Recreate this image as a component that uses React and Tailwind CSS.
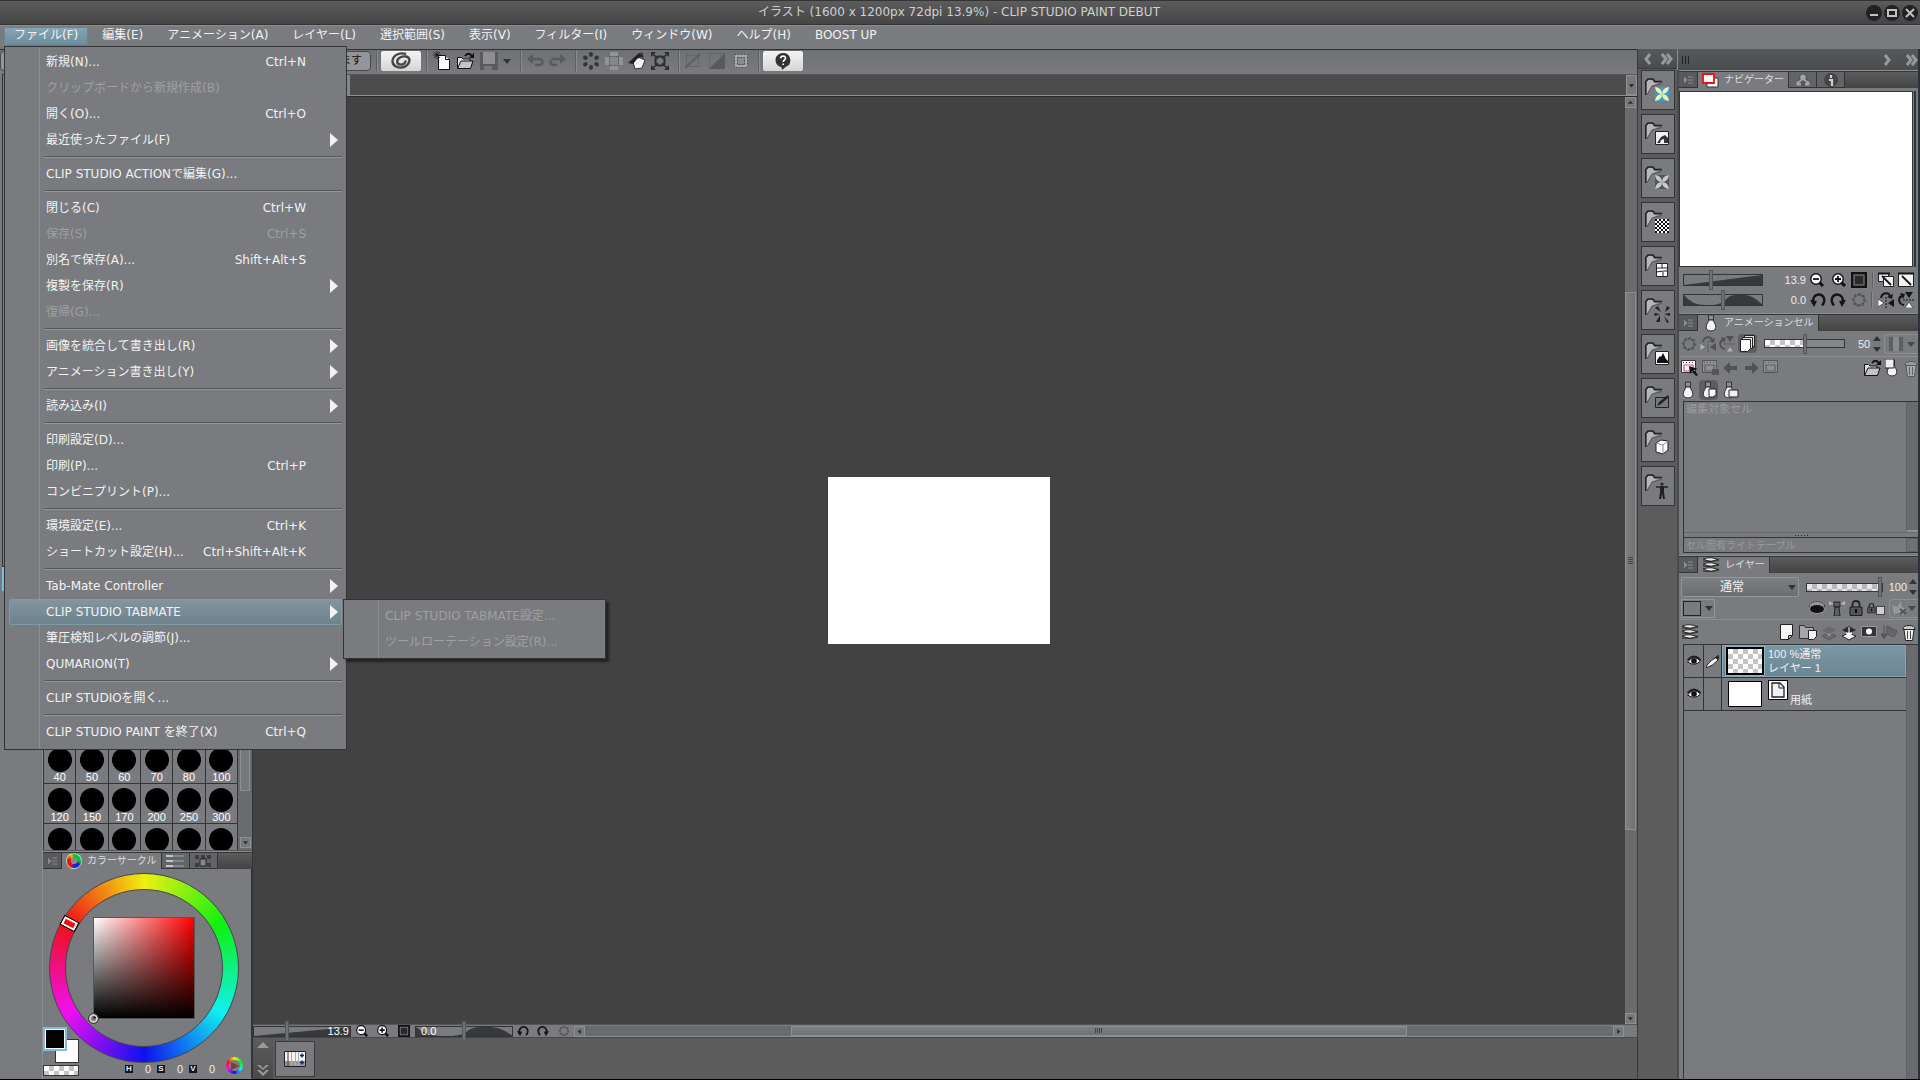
import { useState } from "react"

const MENUS = ["ファイル(F)", "編集(E)", "アニメーション(A)", "レイヤー(L)", "選択範囲(S)", "表示(V)", "フィルター(I)", "ウィンドウ(W)", "ヘルプ(H)", "BOOST UP"]

const FILE_MENU = [
	[
		{ label: "新規(N)...", keys: "Ctrl+N" },
		{ label: "クリップボードから新規作成(B)", off: true },
		{ label: "開く(O)...", keys: "Ctrl+O" },
		{ label: "最近使ったファイル(F)", sub: true },
	],
	[{ label: "CLIP STUDIO ACTIONで編集(G)..." }],
	[
		{ label: "閉じる(C)", keys: "Ctrl+W" },
		{ label: "保存(S)", keys: "Ctrl+S", off: true },
		{ label: "別名で保存(A)...", keys: "Shift+Alt+S" },
		{ label: "複製を保存(R)", sub: true },
		{ label: "復帰(G)...", off: true },
	],
	[
		{ label: "画像を統合して書き出し(R)", sub: true },
		{ label: "アニメーション書き出し(Y)", sub: true },
	],
	[{ label: "読み込み(I)", sub: true }],
	[
		{ label: "印刷設定(D)..." },
		{ label: "印刷(P)...", keys: "Ctrl+P" },
		{ label: "コンビニプリント(P)..." },
	],
	[
		{ label: "環境設定(E)...", keys: "Ctrl+K" },
		{ label: "ショートカット設定(H)...", keys: "Ctrl+Shift+Alt+K" },
	],
	[
		{ label: "Tab-Mate Controller", sub: true },
		{ label: "CLIP STUDIO TABMATE", sub: true, open: true },
		{ label: "筆圧検知レベルの調節(J)..." },
		{ label: "QUMARION(T)", sub: true },
	],
	[{ label: "CLIP STUDIOを開く..." }],
	[{ label: "CLIP STUDIO PAINT を終了(X)", keys: "Ctrl+Q" }],
]

const TABMATE_MENU = ["CLIP STUDIO TABMATE設定...", "ツールローテーション設定(R)..."]

const BRUSH_SIZES = [40, 50, 60, 70, 80, 100, 120, 150, 170, 200, 250, 300]
// next row, only the top of each dot is scrolled into view
const NEXT_SIZES = [350, 400, 450, 500, 600, 700]

const CHECKER = "bg-[repeating-conic-gradient(#c4c4c4_0_25%,#ffffff_0_50%)] bg-[length:10px_10px]"

const Svg = ({ w = 18, h = 18, className = "", children }) => (
	<svg width={w} height={h} viewBox={`0 0 ${w} ${h}`} className={`shrink-0 ${className}`} aria-hidden="true">{children}</svg>
)

/* ---------- icons ---------- */

const NewIcon = () => (
	<Svg w={18} h={20}>
		<path d="M5.5 4.5h7l4 4v10h-11z" fill="#fff" stroke="#111" />
		<path d="M12.5 4.5v4h4" fill="#ddd" stroke="#111" />
		<path d="M4 0v8M0 4h8M1 1l6 6M7 1l-6 6" stroke="#111" strokeWidth=".8" />
	</Svg>
)

const OpenIcon = () => (
	<Svg w={19} h={18}>
		<path d="M1.500 16.500v-11h4l1.500 1.500h7v3" fill="#ddd" stroke="#111" />
		<path d="M1.500 16.500l3.500-7.500h12l-2.500 7.500z" fill="#c4c4c6" stroke="#111" />
		<path d="M9 4c2-3 5-3 7 0" fill="none" stroke="#111" strokeWidth="1.800" />
		<path d="M18 1v5h-5z" fill="#111" />
	</Svg>
)

const SaveIcon = () => (
	<Svg w={18} h={18}>
		<path d="M0 0h18v18H0z" fill="#5b5b5d" />
		<path d="M3 0h12v12H3z" fill="#8d8e91" />
		<path d="M4 14h8v4H4z" fill="#77787b" />
	</Svg>
)

const UndoIcon = ({ flip }) => (
	<Svg w={17} h={14} className={flip ? "-scale-x-100" : ""}>
		<path d="M4 5h8q3.500 0 3.500 3t-3.500 3H8" fill="none" stroke="#5a5b5d" strokeWidth="2.500" strokeDasharray={flip ? "9 0 1 1" : "0"} />
		<path d="M0 5l6-5v10z" fill="#5a5b5d" />
	</Svg>
)

const DotsIcon = () => (
	<Svg>
		{[0, 60, 120, 180, 240, 300].map((a) => (
			<ellipse key={a} cx="9" cy="2.500" rx="2" ry="2.400" fill="#333435" transform={`rotate(${a} 9 9)`} />
		))}
	</Svg>
)

const ClearOutsideIcon = () => (
	<Svg>
		<path d="M5 0h8v5h5v8h-5v5H5v-5H0V5h5z" fill="#929396" />
		<rect x="4.500" y="4.500" width="9" height="9" fill="#86878a" stroke="#555" strokeDasharray="2 1" />
	</Svg>
)

const FillIcon = () => (
	<Svg>
		<path d="M5 10l5-5 7 3-3 8-7 1z" fill="#f4f4f4" stroke="#333" />
		<path d="M0 11L11 1l4 3-6 3-4 5z" fill="#222" />
		<path d="M10 6q0-5 4-5l1 5" fill="none" stroke="#222" />
	</Svg>
)

const TransformIcon = () => (
	<Svg>
		<path d="M2 2l14 14M16 2L2 16" stroke="#2c2d2e" strokeWidth="1.500" />
		<rect x="4.500" y="4.500" width="9" height="9" rx="3" fill="none" stroke="#2c2d2e" strokeWidth="2" />
		<circle cx="9" cy="9" r="3" fill="#7a7b7f" />
		<path d="M0 0h5L0 5zM18 0v5l-5-5zM0 18v-5l5 5zM18 18h-5l5-5z" fill="#2c2d2e" />
	</Svg>
)

const DeselectIcon = () => (
	<Svg w={16} h={16}>
		<rect x="1.500" y="2.500" width="12" height="11" fill="none" stroke="#5e5f62" strokeDasharray="2 1" />
		<path d="M0 15L15 1" stroke="#5e5f62" strokeWidth="2" />
	</Svg>
)

const InvertIcon = () => (
	<Svg w={16} h={16}>
		<path d="M16 0v16H0z" fill="#58595b" />
		<path d="M.5 15V.5H15" fill="none" stroke="#5e5f62" strokeDasharray="2 1" />
	</Svg>
)

const BorderIcon = () => (
	<Svg w={16} h={16}>
		<path d="M1 1h14v14H1z" fill="#a6a7a9" />
		<rect x="1.500" y="1.500" width="13" height="13" fill="none" stroke="#4e4f52" strokeDasharray="2 1" />
		<rect x="4.500" y="4.500" width="7" height="7" fill="#8a8b8e" stroke="#4e4f52" strokeDasharray="2 1" />
	</Svg>
)

const SpiralIcon = () => (
	<Svg w={20} h={18}>
		<path d="M15 2C9 0 2 3 1.500 9c0 5 5 7 9 6.500 5-.5 8-4 8-7.500-.5-4-6-4.500-9.500-2.500-4 2.500-3.500 6.500 0 7 3 .5 6-1.500 5.500-4" fill="none" stroke="#47484a" strokeWidth="2.400" />
	</Svg>
)

const HelpIcon = () => (
	<Svg w={18} h={18}>
		<path d="M9 1a7.200 7.200 0 0 1 3 13.800L8 18l-.5-2.700A7.200 7.200 0 0 1 9 1z" fill="#333" />
		<path d="M6.500 6.200Q7 4 9.200 4q2.300.2 2.300 2.200c0 1.600-2.300 1.800-2.300 3.800M9.200 11.500v1.600" fill="none" stroke="#fff" strokeWidth="1.600" />
	</Svg>
)

const MagIcon = ({ plus, size = 14 }) => (
	<svg width={size} height={size} viewBox="0 0 14 14" className="shrink-0" aria-hidden="true">
		<path d="M9 9l4 4" stroke="#111" strokeWidth="3" />
		<circle cx="6" cy="6" r="5.200" fill="#fff" stroke="#111" strokeWidth="1.400" />
		<path d={plus ? "M3 6h6M6 3v6" : "M3 6h6"} stroke="#111" strokeWidth="1.800" />
	</svg>
)

const FitIcon = ({ size = 16 }) => (
	<svg width={size} height={size} viewBox="0 0 16 16" className="shrink-0" aria-hidden="true">
		<path d="M0 0h16v16H0z" fill="#111" />
		<rect x="3" y="3" width="10" height="10" fill="#2a2a2b" stroke="#77787b" strokeWidth="1.300" />
	</svg>
)

const RotateIcon = ({ flip, size = 16 }) => (
	<svg width={size} height={size} viewBox="0 0 16 16" className={`shrink-0 ${flip ? "-scale-x-100" : ""}`} aria-hidden="true">
		<path d="M3.500 11C2 6 5 2.500 9 2.500c4 0 6 4 5 7.500-.5 1.500-1 2.500-2 3.500" fill="none" stroke="#151515" strokeWidth="2.400" />
		<path d="M0 8l7 1-3 6z" fill="#151515" />
	</svg>
)

const ResetIcon = ({ size = 16 }) => (
	<svg width={size} height={size} viewBox="0 0 16 16" className="shrink-0" aria-hidden="true">
		{[0, 45, 90, 135, 180, 225, 270, 315].map((a) => (
			<path key={a} d="M5 3l5-2.500L9 4z" fill="#515254" transform={`rotate(${a} 8 8)`} />
		))}
	</svg>
)

const FlipIcon = ({ turn, off }) => (
	<Svg w={16} h={16} className={`${turn ? "-rotate-90" : ""} ${off ? "opacity-40" : ""}`}>
		<path d="M8 5v11" stroke="#151515" strokeDasharray="2 1" />
		<path d="M0 7l6 4-6 4z" fill="#fff" stroke="#333" strokeWidth=".7" />
		<path d="M16 7l-6 4 6 4z" fill="#151515" />
		<path d="M3 6c1-6 8-6 9-2" fill="none" stroke="#151515" strokeWidth="2" />
		<path d="M15 2l-1 5-5-2z" fill="#151515" />
	</Svg>
)

const ResizeViewIcon = ({ single }) => (
	<Svg w={16} h={16}>
		{!single && <path d="M.5 1.500h10v8H.5z" fill="#e6e6e8" stroke="#222" />}
		<path d={single ? "M.5 1.500h15v13H.5z" : "M5.500 4.500h10v10h-10z"} fill="#f2f2f2" stroke="#222" />
		<path d={single ? "M0 .5h16v2H0z" : "M0 .5h12v2H0z"} fill="#151515" />
		<path d="M4 4l9 9" stroke="#151515" strokeWidth="1.800" />
	</Svg>
)

const FolderShape = () => (
	<>
		<path d="M1 17V4l2-2h4l2 3h4L7 8z" fill="#b5b6b9" />
		<path d="M.8 17V3.500L3 1h5l2 2.500h7" fill="none" stroke="#222" strokeWidth="1.600" />
		<path d="M2 17l5-9 10-2.500" fill="none" stroke="#555" />
	</>
)

// small picture drawn over the lower right of each material folder
const MATERIAL_BADGES = [
	<g key="color"><path d="M10 9h14v14H10z" fill="#2f9fdc" /><path d="M10 9q7 1 7 7-6 0-7-7zM24 9q-7 1-7 7 6 0 7-7zM10 23q7-1 7-7-6 0-7 7zM24 23q-7-1-7-7 6 0 7 7z" fill="#f5efa8" /></g>,
	<g key="mono"><path d="M10.500 9.500h13v13h-13z" fill="#f1f1f1" stroke="#222" /><path d="M12 21l4-6 4-2 3 3v5h-4v-4l-3 1-1 3z" fill="#333" /></g>,
	<g key="pattern"><path d="M10 9h14v14H10z" fill="#55565a" /><path d="M10 9q7 1 7 7-6 0-7-7zM24 9q-7 1-7 7 6 0 7-7zM10 23q7-1 7-7-6 0-7 7zM24 23q-7-1-7-7 6 0 7 7z" fill="#c9cacc" /></g>,
	<g key="tone"><path d="M10 9h14v14H10z" fill="#fff" />{Array.from({ length: 49 }, (_, i) => i).filter((i) => i % 2 === 0).map((i) => (<rect key={i} x={10 + (i % 7) * 2} y={9 + Math.floor(i / 7) * 2} width="2" height="2" fill="#111" />))}</g>,
	<g key="frame"><path d="M11.500 9.500h11v13h-11z" fill="#fff" stroke="#222" /><path d="M11 14h12M17 9v5M11 18l8-1 4 0M18 18v4" fill="none" stroke="#222" /></g>,
	<g key="lines" fill="#222"><path d="M10 10l3-2 3 6zM22 8l3 2-5 4zM9 15l6 1-5 2zM25 18l-6-2 6-1zM11 24l4-7 0 7zM24 24l-5-6 3 7z" /></g>,
	<g key="image"><path d="M10.500 9.500h13v13h-13z" fill="#fff" stroke="#222" /><path d="M12 21v-3l3-4 1 1 2-4 3 6 2 2v2z" fill="#111" /></g>,
	<g key="pen"><path d="M10.500 11.500h13v10h-13z" fill="#77787b" stroke="#222" /><path d="M12 20l2-4 9-7 1 2-8 7z" fill="#222" /></g>,
	<g key="cube"><path d="M11 13l5-3 7 1v9l-5 4-7-2z" fill="#fff" stroke="#222" /><path d="M11 13l7 2 5-4M18 15v9" fill="none" stroke="#888" /></g>,
	<g key="pose"><circle cx="17" cy="10" r="1.500" fill="#222" /><path d="M11 13h12" stroke="#222" strokeWidth="1.500" /><path d="M15 12h4v6l1 7h-2l-1-5-1 5h-2l1-7z" fill="#222" /></g>,
]

const BulbIcon = ({ children, w = 14 }) => (
	<Svg w={w} h={18}>
		<path d="M4.500 1h5v5h-5z" fill="#8f9093" stroke="#333" />
		<path d="M5 6l-2.500 5q-1.500 5.500 4.500 6 6-.5 4.500-6L9 6z" fill="#f3f3f3" stroke="#333" />
		{children}
	</Svg>
)

const StackIcon = () => (
	<Svg w={18} h={16}>
		{[1, 6, 11].map((y) => (
			<g key={y}>
				<path d={`M1 ${y + 1}q8-3 16 1-8 3-16-1z`} fill="#ececec" stroke="#2a2a2b" />
				<path d={`M1 ${y + 3}q8 2 16-2`} fill="none" stroke="#2a2a2b" />
			</g>
		))}
	</Svg>
)

const CelIcon = ({ off, children }) => (
	<Svg w={18} h={16} className={off ? "opacity-50" : ""}>
		<path d="M.5.5h14v12H.5z" fill={off ? "#a4a5a7" : "#fff"} stroke="#333" />
		<path d="M2 2.500h11" stroke="#333" strokeDasharray="1 2" />
		<path d="M3 5h9v6H3z" fill="none" stroke={off ? "#444" : "#d93a9c"} strokeWidth="1.200" />
		{children}
	</Svg>
)

const LockIcon = ({ w = 14, h = 16 }) => (
	<svg width={w} height={h} viewBox="0 0 14 16" className="shrink-0" aria-hidden="true">
		<path d="M3.500 7V4.500q0-3.500 3.500-3.500t3.500 3.500V7" fill="none" stroke="#222" strokeWidth="1.800" />
		<path d="M1 7h12v8.500H1z" fill="#555659" stroke="#1c1c1d" />
		<path d="M7 9v4" stroke="#111" strokeWidth="2" />
	</svg>
)

const EyeIcon = () => (
	<Svg w={14} h={12}>
		<path d="M.5 7Q7-1 13.500 6 8 12 .5 7z" fill="#f1f1f1" stroke="#1b1b1c" />
		<path d="M.5 5Q7-2 13.500 5" fill="none" stroke="#1b1b1c" strokeWidth="1.800" />
		<circle cx="7" cy="6" r="2.800" fill="#111" />
	</Svg>
)

const MergeIcon = ({ off }) => (
	<Svg w={16} h={17} className={off ? "opacity-40" : ""}>
		<path d="M1 6l7-4 7 4-7 4z" fill={off ? "#555" : "#2a2a2b"} />
		<path d="M1 12l7-3 7 3-7 4z" fill={off ? "#555" : "#f0f0f0"} stroke="#222" />
		<path d="M8 3v8M5 9l3 4 3-4z" fill="#fff" stroke={off ? "#555" : "#fff"} />
	</Svg>
)

const PageIcon = () => (
	<Svg w={16} h={17}>
		<path d="M1.500.5h12v11l-4 4h-8z" fill="#f8f8f8" stroke="#222" />
		<path d="M13.500 11.500h-4v4z" fill="#bbb" stroke="#222" />
	</Svg>
)

const TrashIcon = () => (
	<Svg w={14} h={17}>
		<path d="M2 5.500h10l-1.500 11h-7z" fill="#f2f2f2" stroke="#222" />
		<path d="M5.500 7v8M8.500 7v8" stroke="#444" />
		<path d="M1 5.500q0-4 6-4t6 4z" fill="#ccc" stroke="#222" />
	</Svg>
)

const Tri = ({ dir }) => (
	<Svg w={8} h={8}>
		<path d={{ up: "M0 6h8L4 1z", down: "M0 2h8L4 7z", left: "M6 0v8L1 4z", right: "M2 0v8l5-4z" }[dir]} fill="#323334" />
	</Svg>
)

const Chevrons = ({ d, w = 10, h = 12 }) => (
	<Svg w={w} h={h}><path d={d} fill="none" stroke="#98999b" strokeWidth="3" /></Svg>
)

/* ---------- shared parts ---------- */

const Sep = () => <div className="w-[2px] self-stretch border-l border-[#5e5f62] bg-[#8b8c8f]" />

const IconButton = ({ label, className = "", children }) => (
	<button type="button" aria-label={label} className={`flex shrink-0 items-center justify-center ${className}`}>{children}</button>
)

const RANGE = "absolute inset-0 h-full w-full appearance-none bg-transparent [&::-webkit-slider-thumb]:w-1 [&::-webkit-slider-thumb]:appearance-none [&::-webkit-slider-thumb]:border [&::-webkit-slider-thumb]:border-[#55565a] [&::-webkit-slider-thumb]:bg-[#707174]"

const WedgeSlider = ({ label, value, wave, className }) => {
	const [v, setV] = useState(value)
	return (
		<div className={`relative shrink-0 border border-[#333435] bg-[#7a7b7f] ${className}`}>
			<svg viewBox="0 0 80 12" preserveAspectRatio="none" className="block h-full w-full" aria-hidden="true">
				<path d={wave ? "M0 0Q8 12 22 12H0zM30 12Q40 11 44 4 48 0 54 0H62Q70 0 80 11V12z" : "M0 12L80 0v12z"} fill="#38393b" />
			</svg>
			<input type="range" min="0" max="100" aria-label={label} value={v} onChange={(e) => setV(e.target.value)} className={`${RANGE} [&::-webkit-slider-thumb]:h-5`} />
		</div>
	)
}

const OpacitySlider = ({ label, value, className, children }) => {
	const [v, setV] = useState(value)
	return (
		<div className={`relative h-[9px] shrink-0 border border-[#333435] bg-[#85868a] ${className}`}>
			{children}
			<input type="range" min="0" max="100" aria-label={label} value={v} onChange={(e) => setV(e.target.value)} className={`${RANGE} [&::-webkit-slider-thumb]:h-5`} />
		</div>
	)
}

const Spinner = () => (
	<div className="flex flex-col gap-[2px]">
		<IconButton label="増やす"><Tri dir="up" /></IconButton>
		<IconButton label="減らす"><Tri dir="down" /></IconButton>
	</div>
)

const TabBar = ({ icon, title, children }) => (
	<div className="flex h-[17px] shrink-0 border-t border-[#333435] bg-linear-to-b from-[#5c5c5c] to-[#444444]">
		<button type="button" aria-label="パレットメニュー" className="flex w-[18px] items-center justify-center border-b border-[#333435] bg-[#58595b]">
			<Svg w={9} h={8}><path d="M0 1v6l3-3zM4 1h5M4 4h5M4 7h5" fill="#8a8b8e" stroke="#8a8b8e" /></Svg>
		</button>
		<button type="button" className="flex items-center gap-[5px] border-x border-[#333435] bg-[#7a7b7f] px-1 text-[10px] leading-4 text-[#dedede]">
			{icon}
			<span>{title}</span>
		</button>
		{children}
	</div>
)

const BackTab = ({ label, children }) => (
	<button type="button" aria-label={label} className="flex w-7 items-center justify-center border-r border-b border-[#333435] bg-[#636467]">{children}</button>
)

const ScrollButton = ({ dir, label }) => (
	<button type="button" aria-label={label} className="flex size-[11px] shrink-0 items-center justify-center border border-[#8f9093] bg-[#77787b]">
		<svg width="5" height="5" viewBox="0 0 8 8" aria-hidden="true">
			<path d={{ up: "M0 6h8L4 1z", down: "M0 2h8L4 7z", left: "M6 0v8L1 4z", right: "M2 0v8l5-4z" }[dir]} fill="#2b2c2d" />
		</svg>
	</button>
)

/* ---------- menus ---------- */

const SubMenu = () => (
	<ul role="menu" className="absolute top-0 left-[334px] z-20 w-[263px] border border-[#333435] bg-[linear-gradient(90deg,transparent_34px,#8d8e91_34px,#8d8e91_35px,transparent_35px)] bg-[#7a7b7f] py-[3px] shadow-[3px_3px_2px_#222]">
		{TABMATE_MENU.map((label) => (
			<li key={label}>
				<button type="button" role="menuitem" disabled className="flex h-[26px] items-center pl-[41px] whitespace-nowrap text-[#a0a0a0]">{label}</button>
			</li>
		))}
	</ul>
)

const FileMenu = () => (
	<div role="menu" className="absolute top-[46px] left-1 z-10 w-[343px] border border-[#333435] bg-[linear-gradient(90deg,transparent_34px,#8d8e91_34px,#8d8e91_35px,transparent_35px)] bg-[#7a7b7f] px-1 pt-[2px] pb-1 text-xs">
		{FILE_MENU.map((group, i) => (
			<div key={i}>
				{i > 0 && <div className="ml-9 flex h-2 items-center"><div className="h-[2px] w-full border-t border-[#555659] bg-[#97989a]" /></div>}
				{group.map((item) => (
					<div key={item.label} className="relative">
						<button
							type="button"
							role="menuitem"
							disabled={item.off}
							className={`flex h-[26px] w-full items-center rounded-xs pr-1 pl-[37px] whitespace-nowrap ${item.off ? "text-[#a0a0a0]" : "text-[#f2f2f2]"} ${item.open ? "bg-linear-to-b from-[#84959f] to-[#6b828d] inset-ring inset-ring-[#7d9aa7]" : ""}`}
						>
							<span className="flex-1 text-left">{item.label}</span>
							<span>{item.keys}</span>
							<span className="flex w-8 justify-end">
								{item.sub && <Svg w={8} h={14}><path d="M0 0v14l8-7z" fill="#f2f2f2" /></Svg>}
							</span>
						</button>
						{item.open && <SubMenu />}
					</div>
				))}
			</div>
		))}
	</div>
)

const TitleBar = () => (
	<header className="flex h-[25px] shrink-0 items-center border-t border-b border-[#333435] bg-linear-to-b from-[#5c5c5c] to-[#454545] pr-[2px]">
		<div className="w-[52px]" />
		<h1 className="flex-1 pb-px text-center text-xs text-[#cfcfcf]">イラスト (1600 x 1200px 72dpi 13.9%) - CLIP STUDIO PAINT DEBUT</h1>
		<div className="flex gap-[2px]">
			{["M4 10h8", "M4 5h8v6H4z", "M4 4l8 8M12 4l-8 8"].map((d, i) => (
				<IconButton key={d} label={["最小化", "最大化", "閉じる"][i]} className="size-4 rounded-full bg-[#222]">
					<Svg w={16} h={16}><path d={d} fill="none" stroke="#c2c2c2" strokeWidth="2" /></Svg>
				</IconButton>
			))}
		</div>
	</header>
)

const MenuBar = () => (
	<nav className="flex h-[24px] shrink-0 items-start gap-1 border-t border-[#8d8e91] bg-[#7a7b7f] pt-px pl-1 text-xs text-[#f2f2f2]">
		{MENUS.map((m, i) => (
			<button key={m} type="button" className={`h-[18px] rounded-xs px-[10px] pb-[2px] leading-4 ${i === 0 ? "bg-linear-to-b from-[#87a6b5] to-[#6d8d9c] inset-ring inset-ring-[#6a8795]" : ""}`}>{m}</button>
		))}
	</nav>
)

const CommandBar = () => (
	<div className="flex h-[25px] shrink-0 items-center gap-[5px] border-t border-[#2f3031] bg-linear-to-b from-[#6f7074] to-[#7a7b7f] pb-[2px]">
		<button type="button" className="h-5 w-[371px] rounded border border-[#47484a] bg-[#949598] pr-2 text-right text-[11px] leading-4 text-[#111]">ます</button>
		<Sep />
		<IconButton label="CLIP STUDIO" className="-ml-[2px] h-5 w-10 rounded-xs bg-linear-to-b from-[#f4f4f4] to-[#d4d6d6]"><SpiralIcon /></IconButton>
		<Sep />
		<IconButton label="新規"><NewIcon /></IconButton>
		<IconButton label="開く"><OpenIcon /></IconButton>
		<IconButton label="保存"><SaveIcon /></IconButton>
		<IconButton label="保存メニュー" className="mr-1"><Tri dir="down" /></IconButton>
		<Sep />
		<IconButton label="取り消し"><UndoIcon /></IconButton>
		<IconButton label="やり直し" className="mr-1"><UndoIcon flip /></IconButton>
		<Sep />
		<IconButton label="消去"><DotsIcon /></IconButton>
		<IconButton label="選択範囲外を消去"><ClearOutsideIcon /></IconButton>
		<IconButton label="塗りつぶし"><FillIcon /></IconButton>
		<IconButton label="拡大・縮小・回転" className="mr-1"><TransformIcon /></IconButton>
		<Sep />
		<IconButton label="選択を解除"><DeselectIcon /></IconButton>
		<IconButton label="選択範囲を反転" className="mx-[3px]"><InvertIcon /></IconButton>
		<IconButton label="選択範囲の境界線を表示" className="mr-1"><BorderIcon /></IconButton>
		<Sep />
		<IconButton label="ヘルプ" className="-ml-[2px] h-5 w-10 rounded-xs bg-linear-to-b from-[#f4f4f4] to-[#d4d6d6]"><HelpIcon /></IconButton>
	</div>
)

/* ---------- left side ---------- */

const ColorCircle = () => (
	<section className="flex h-[227px] shrink-0 flex-col border-t border-[#8d8e91]">
		<TabBar
			title="カラーサークル"
			icon={<span className="size-4 rounded-full border border-white/60 bg-[radial-gradient(circle,#888_3px,transparent_3px),conic-gradient(#10c030,#10c030_25%,#1020f0_35%,#1020f0_48%,#f01010_60%,#f01010_80%,#f0b010_92%,#10c030)]" />}
		>
			<BackTab label="カラースライダー"><Svg w={18} h={12}><path d="M0 1h18M0 6h18M0 11h18" stroke="#85868a" strokeWidth="2" /><path d="M0 1h7M0 6h7M0 11h7" stroke="#c4c5c7" strokeWidth="2" /></Svg></BackTab>
			<BackTab label="カラーセット"><Svg w={16} h={12}><path d="M0 0h4v4H0zM6 0h4v4H6zM12 0h4v4h-4zM0 8h4v4H0zM12 8h4v4h-4z" fill="#3d3e40" /><path d="M5 4h6v7H5z" fill="#888" stroke="#222" /></Svg></BackTab>
		</TabBar>
		<div className="relative flex-1 border-r border-[#333435]">
			<div className="relative mt-1 ml-[6px] flex size-[190px] items-center justify-center rounded-full border border-[#44454a] bg-[conic-gradient(#f0f010,#10f010,#10f0f0,#1010f0,#f010f0,#f01018,#f0f010)]">
				<div className="flex size-[158px] items-center justify-center rounded-full border border-[#44454a] bg-[#7a7b7f]">
					<div className="size-[102px] border border-[#55565a] bg-[linear-gradient(to_top,#000,transparent),linear-gradient(to_right,#fff,#f00)]" />
				</div>
				<span className="absolute top-[45px] left-[12px] h-[9px] w-[15px] rotate-[28deg] border-2 border-white bg-[#f01010] outline outline-black" />
				<span className="absolute top-[140px] left-[39px] size-[9px] rounded-full border-2 border-[#d0d0d0] outline outline-[#333]" />
			</div>
			<div className="absolute bottom-[2px] left-0 h-[49px] w-[37px]">
				<button type="button" aria-label="サブカラー" className="absolute top-3 left-3 size-[24px] border border-[#333435] bg-white" />
				<button type="button" aria-label="メインカラー" className="absolute top-0 left-0 size-[24px] border-2 border-[#7dbce0] bg-black inset-ring inset-ring-white" />
				<button type="button" aria-label="透明色" className={`absolute bottom-0 left-0 h-[11px] w-[36px] border border-[#333435] ${CHECKER}`} />
			</div>
			<dl className="absolute right-[30px] bottom-px flex font-['Liberation_Sans',sans-serif] text-[11px] leading-4 text-[#ededed]">
				{["H", "S", "V"].map((k) => (
					<div key={k} className="flex w-8 items-center">
						<dt className="flex h-2 w-2 items-center justify-center bg-[#14142a] text-[8px] font-bold">{k}</dt>
						<dd className="w-[18px] text-right">0</dd>
					</div>
				))}
			</dl>
			<button type="button" aria-label="色空間の切り替え" className="absolute right-2 bottom-1 flex size-[17px] items-center justify-center rounded-full bg-[radial-gradient(circle,#7a7b7f_5px,transparent_6px),conic-gradient(#f0f010,#10f010,#10f0f0,#1010f0,#f010f0,#f01018,#f0f010)]">
				<Svg w={8} h={8}><path d="M0 0l8 4-8 4z" fill="#7d3c30" /></Svg>
			</button>
		</div>
	</section>
)

const LeftDock = () => (
	<aside className="flex w-[253px] shrink-0 border-r border-[#333435] bg-[#7a7b7f]">
		<div className="flex w-[43px] shrink-0 flex-col border-r border-[#8d8e91] pl-[2px]">
			<div className="h-[493px] border border-[#333435]" />
			<button type="button" aria-label="ツール" className="h-6 bg-[#7dbce0]" />
		</div>
		<div className="flex min-w-0 flex-1 flex-col pb-px">
			<div className="flex min-h-0 flex-1 flex-col justify-end border-b border-[#55565a]">
				<div className="flex h-[106px]">
					<div className="grid flex-1 auto-rows-[40px] grid-cols-6 overflow-hidden border-l border-[#333435] font-['Liberation_Sans',sans-serif]">
						{BRUSH_SIZES.map((s) => (
							<button key={s} type="button" className="flex flex-col items-center border-r border-b border-[#333435] pt-1 text-[11px] leading-3 text-white">
								<span className="size-6 shrink-0 rounded-full bg-black" />
								<span className="z-0 -mt-px">{s}</span>
							</button>
						))}
						{NEXT_SIZES.map((s) => (
							<button key={s} type="button" aria-label={String(s)} className="flex justify-center border-r border-[#333435] pt-1">
								<span className="size-6 rounded-full bg-black" />
							</button>
						))}
					</div>
					<div className="flex w-[14px] flex-col items-center bg-[#6a6b6e] pb-[2px]">
						<div className="h-[47px] w-[10px] border border-[#8f9093] bg-[#77787b]" />
						<div className="flex-1" />
						<ScrollButton dir="down" label="下へ" />
					</div>
				</div>
			</div>
			<ColorCircle />
		</div>
	</aside>
)

/* ---------- canvas ---------- */

const ZoomRow = () => (
	<div className="flex h-[13px] shrink-0 items-center border-t border-[#55565a] bg-[#7a7b7f] font-['Liberation_Sans',sans-serif] text-[11px] text-white">
		<div className="relative w-[98px]">
			<WedgeSlider label="ズーム" value={34} className="h-[11px] w-full" />
			<span className="pointer-events-none absolute right-[2px] bottom-0 leading-3">13.9</span>
		</div>
		<div className="flex w-16 justify-around">
			<IconButton label="縮小"><MagIcon size={12} /></IconButton>
			<IconButton label="拡大"><MagIcon size={12} plus /></IconButton>
			<IconButton label="フィット"><FitIcon size={12} /></IconButton>
		</div>
		<div className="relative w-[98px]">
			<WedgeSlider label="回転" value={50} wave className="h-[11px] w-full" />
			<span className="pointer-events-none absolute bottom-0 left-[6px] leading-3">0.0</span>
		</div>
		<div className="flex w-[61px] justify-around">
			<IconButton label="左回転"><RotateIcon size={12} /></IconButton>
			<IconButton label="右回転"><RotateIcon size={12} flip /></IconButton>
			<IconButton label="回転をリセット"><ResetIcon size={12} /></IconButton>
		</div>
		<ScrollButton dir="left" label="左へ" />
		<div className="flex h-[11px] flex-1 justify-center border-b border-[#8f9093] bg-[#6a6b6e]">
			<div className="flex w-3/5 items-center justify-center gap-px border border-[#8f9093] bg-linear-to-b from-[#7e7f83] to-[#707174]">
				{[0, 1, 2, 3].map((n) => <span key={n} className="h-[5px] w-px bg-[#444]" />)}
			</div>
		</div>
		<ScrollButton dir="right" label="右へ" />
		<div className="w-[13px]" />
	</div>
)

const CanvasArea = () => (
	<main className="flex min-w-0 flex-1 flex-col">
		<CommandBar />
		<div className="flex min-h-0 flex-1">
			<LeftDock />
			<div className="flex min-w-0 flex-1 flex-col">
				<div className="flex h-[22px] shrink-0 justify-between border-t border-b border-[#8d8e91] border-t-[#55565a] bg-[#4c4c4c]">
					<div className="w-[97px] border-r-3 border-[#85868a] bg-[#7a7b7f]" />
					<button type="button" aria-label="タブ一覧" className="flex w-[11px] items-center justify-center border border-[#8f9093] bg-[#77787b]"><svg width="5" height="5" viewBox="0 0 8 8" aria-hidden="true"><path d="M0 2h8L4 7z" fill="#222" /></svg></button>
				</div>
				<div className="flex min-h-0 flex-1 border-t border-[#2b2b2b]">
					<div className="flex flex-1 items-center justify-center bg-[#424242]">
						<div className="h-[167px] w-[222px] bg-white" />
					</div>
					<div className="flex w-[12px] flex-col bg-[#6a6b6e] pr-px">
						<ScrollButton dir="up" label="上へ" />
						<div className="h-[184px]" />
						<div className="flex h-[58%] flex-col items-center justify-center gap-px border border-[#8f9093] bg-linear-to-r from-[#7e7f83] to-[#707174]">
							{[0, 1, 2, 3].map((n) => <span key={n} className="h-px w-[5px] bg-[#444]" />)}
						</div>
						<div className="flex-1" />
						<ScrollButton dir="down" label="下へ" />
					</div>
				</div>
				<ZoomRow />
				<div className="flex h-[42px] shrink-0 items-center gap-[2px] border-t border-[#47484a] bg-[#5c5c5c]">
					<div className="flex w-5 flex-col items-center justify-between self-stretch bg-linear-to-b from-[#5c5c5c] to-[#48494a] py-[3px]">
						<Svg w={12} h={7}><path d="M0 7l6-6 6 6z" fill="#98999b" /></Svg>
						<Svg w={12} h={12}><path d="M0 1h3l3 3 3-3h3L6 6zM0 6h3l3 3 3-3h3l-6 6z" fill="#98999b" /></Svg>
					</div>
					<IconButton label="タイムライン" className="h-[36px] w-[40px] border border-[#3a3b3c] bg-[#7a7b7f]">
						<Svg w={22} h={16}>
							<path d="M.5.5h21v15H.5z" fill="#f4f4f4" stroke="#222" />
							<path d="M1 10h20v5H1z" fill="#999" />
							<path d="M4 1v14" stroke="#6b2b2b" />
							<path d="M7.500 1v14M11.500 1v14M14.500 1v14" stroke="#aaa" />
							<path d="M16 4.500h4M18 2.500v4M16 11.500h4M18 9.500v4" stroke="#20207a" strokeWidth="1.500" />
						</Svg>
					</IconButton>
				</div>
			</div>
		</div>
	</main>
)

/* ---------- right side ---------- */

const MaterialStrip = () => (
	<aside className="flex w-[40px] shrink-0 flex-col border-l border-[#3a3b3c] bg-[#5c5c5c]">
		<div className="flex h-[20px] items-center justify-between border-b border-[#3a3b3c] bg-linear-to-b from-[#58595a] to-[#4a4b4c] px-1">
			<Chevrons d="M8 1L4 6l4 5" />
			<Chevrons d="M1 1l4 5-4 5M6 1l4 5-4 5" w={12} />
		</div>
		<div className="flex flex-col items-center gap-1 pt-px">
			{MATERIAL_BADGES.map((badge) => (
				<IconButton key={badge.key} label={`素材 ${badge.key}`} className="h-[40px] w-[34px] border border-[#333435] bg-[#7a7b7f]">
					<Svg w={25} h={25}><FolderShape />{badge}</Svg>
				</IconButton>
			))}
		</div>
	</aside>
)

const Navigator = () => (
	<section className="shrink-0 border-t border-[#8d8e91]">
		<TabBar
			title="ナビゲーター"
			icon={<Svg w={17} h={15}><path d="M5 5h11v9H5z" fill="#fff" stroke="#333" /><path d="M1 1h11v9H1z" fill="#fff" stroke="#f01010" strokeWidth="1.800" /></Svg>}
		>
			<BackTab label="サブビュー"><Svg w={14} h={12}><path d="M0 12q-1-6 4-6Q3 0 7 0t3 6q5 0 4 6z" fill="#a5a6a9" stroke="#3a3b3c" strokeWidth=".7" /><path d="M5 12V9H3l4-3 4 3H9v3z" fill="#55565a" /></Svg></BackTab>
			<BackTab label="情報"><Svg w={14} h={14}><circle cx="7" cy="7" r="7" fill="#444" /><path d="M7 2v3M5 7h3v6" stroke="#d0d0d0" strokeWidth="2.200" fill="none" /></Svg></BackTab>
		</TabBar>
		<div className="mt-[3px] mr-[2px] border-r-2 border-[#333435] pr-px">
			<div className="h-[176px] border border-[#333435] bg-white" />
		</div>
		<div className="grid grid-cols-[80px_1fr_104px] items-center gap-y-[2px] px-1 py-1 font-['Liberation_Sans',sans-serif] text-[11px] text-[#ededed]">
			<WedgeSlider label="ズーム倍率" value={34} className="h-3" />
			<output className="pr-1 text-right leading-[18px]">13.9</output>
			<div className="flex items-center justify-between">
				<IconButton label="縮小"><MagIcon /></IconButton>
				<IconButton label="拡大" className="mr-px ml-1"><MagIcon plus /></IconButton>
				<IconButton label="100%"><FitIcon /></IconButton>
				<Sep />
				<IconButton label="フィッティング"><ResizeViewIcon /></IconButton>
				<IconButton label="全体表示"><ResizeViewIcon single /></IconButton>
			</div>
			<WedgeSlider label="回転角度" value={50} wave className="h-3" />
			<output className="pr-1 text-right leading-[18px]">0.0</output>
			<div className="flex items-center justify-between">
				<IconButton label="左回転"><RotateIcon /></IconButton>
				<IconButton label="右回転"><RotateIcon flip /></IconButton>
				<IconButton label="回転をリセット"><ResetIcon /></IconButton>
				<Sep />
				<IconButton label="左右反転"><FlipIcon /></IconButton>
				<IconButton label="上下反転"><FlipIcon turn /></IconButton>
			</div>
		</div>
	</section>
)

const AnimationCel = () => (
	<section className="mb-[2px] shrink-0 border-t border-[#8d8e91] text-[11px]">
		<TabBar title="アニメーションセル" icon={<span className="flex w-[17px] justify-center"><BulbIcon /></span>} />
		<div className="flex h-[26px] items-center gap-[3px] border-b border-[#8d8e91] pl-[2px] text-[#ededed]">
			<ResetIcon />
			<FlipIcon off />
			<FlipIcon turn off />
			<IconButton label="オニオンスキン" className="size-[19px] rounded bg-[#5e5f62]">
				<Svg w={15} h={17}><path d="M4.500.5h10v11h-10z" fill="#ddd" stroke="#222" /><path d="M2.500 2.500h10v11h-10z" fill="#eee" stroke="#222" /><path d="M.5 4.500h10v9l-3 3h-7z" fill="#fff" stroke="#222" /></Svg>
			</IconButton>
			<OpacitySlider label="セルの不透明度" value={50} className="ml-1 w-[81px]">
				<div className={`h-full w-1/2 ${CHECKER}`} />
			</OpacitySlider>
			<output className="ml-[10px] font-['Liberation_Sans',sans-serif] leading-4">50</output>
			<Spinner />
			<button type="button" aria-label="レイヤーカラー" disabled className="flex h-5 flex-1 items-center gap-1 rounded-l border border-r-0 border-[#95969a] pl-1 opacity-70">
				<span className="h-[14px] w-[14px] shrink-0 border-x-4 border-[#55565a] bg-[#8f9093]" />
				<Tri dir="down" />
			</button>
		</div>
		<div className="flex h-[22px] items-center gap-[3px] pl-[2px]">
			<CelIcon><path d="M8 6l9 3-4 1 4 5-2 1-4-5-2 3z" fill="#111" /></CelIcon>
			<CelIcon off><path d="M10 9h7v6h-7z" fill="#333" /></CelIcon>
			<Svg w={16} h={14}><path d="M0 7l7-6v4h7v4H7v4z" fill="#515254" /></Svg>
			<Svg w={18} h={14}><path d="M17 7l-7-6v4H3v4h7v4z" fill="#515254" /></Svg>
			<CelIcon off />
			<div className="flex-1" />
			<OpenIcon />
			<BulbIcon w={16}><path d="M0 0h9v9H0z" fill="#eee" stroke="#222" /></BulbIcon>
			<span className="opacity-40"><TrashIcon /></span>
		</div>
		<div className="flex h-[22px] items-center gap-1 pl-[2px]">
			<BulbIcon />
			<IconButton label="ライトテーブル" className="h-5 w-[19px] rounded bg-[#5e5f62]"><BulbIcon w={16}><path d="M8 8h7v6l-3 2H8z" fill="#fff" stroke="#222" /></BulbIcon></IconButton>
			<BulbIcon w={17}><path d="M7 9h9v7H7z" fill="#eee" stroke="#222" /></BulbIcon>
		</div>
		<div className="ml-1 border-l border-[#333435]">
			<div className="flex h-[132px] justify-between border-t border-b border-[#333435] border-b-[#66676a]">
				<span className="pl-[2px] leading-4 text-[#999a9c]">編集対象セル</span>
				<div className="w-3 border-b-2 border-l border-[#8d8e91] border-l-[#606164] bg-[#6a6b6e]" />
			</div>
			<div className="flex h-1 items-center justify-center gap-[2px]">
				{[0, 1, 2, 3, 4].map((n) => <span key={n} className="size-px bg-[#222]" />)}
			</div>
			<div className="flex h-[16px] justify-between border-t border-b border-[#333435]">
				<span className="pl-[2px] text-[10px] leading-4 text-[#999a9c]">セル固有ライトテーブル</span>
				<div className="w-3 border border-[#606164] bg-[#707174]" />
			</div>
		</div>
	</section>
)

const LayerRow = ({ active, thumb, children }) => (
	<li className="grid h-[33px] grid-cols-[20px_18px_1fr] border-b border-[#333435]">
		<IconButton label="レイヤーの表示" className="border-r border-[#333435]"><EyeIcon /></IconButton>
		<span className="flex items-center justify-center border-r border-[#333435]">
			{active && <Svg w={13} h={13}><path d="M0 13q1-5 9-10l4-3-1 5q-5 6-12 8z" fill="#f2f2f2" stroke="#222" /><path d="M9 3l4-3-1 5z" fill="#222" /></Svg>}
		</span>
		<div className={`flex items-center gap-1 overflow-hidden ${active ? "bg-linear-to-b from-[#7b99a7] to-[#6c8592] pl-1 inset-ring inset-ring-[#87a6b4]" : "pl-[6px]"}`}>
			{thumb}
			{children}
		</div>
	</li>
)

const Layers = () => (
	<section className="flex min-h-0 flex-1 flex-col border-t border-[#8d8e91] font-['Liberation_Sans','Noto_Sans_CJK_JP',sans-serif] text-[11px] text-[#f0f0f0]">
		<TabBar title="レイヤー" icon={<StackIcon />} />
		<div className="flex items-center pt-[4px] pl-[2px]">
			<div className="relative flex items-center">
				<select aria-label="合成モード" className="h-5 w-[118px] appearance-none rounded-xs border border-[#95969a] bg-linear-to-b from-[#7e7f83] to-[#6c6d70] pl-[38px] text-xs">
					<option>通常</option>
				</select>
				<span className="pointer-events-none absolute right-[3px]"><Tri dir="down" /></span>
			</div>
			<OpacitySlider label="不透明度" value={100} className="ml-[7px] w-[77px]">
				<div className={`h-full w-full opacity-80 ${CHECKER}`} />
			</OpacitySlider>
			<output className="mr-[2px] flex-1 text-right leading-4">100</output>
			<Spinner />
			<span className="w-px" />
		</div>
		<div className="flex h-[23px] items-center gap-1 border-b border-[#8d8e91] pl-[2px]">
			<button type="button" aria-label="レイヤーカラー" className="flex h-[19px] w-[34px] items-center gap-1 border border-[#95969a] px-px">
				<span className="h-[15px] w-[18px] border border-[#222]" />
				<Tri dir="down" />
			</button>
			<div className="flex-1" />
			<IconButton label="下のレイヤーでクリッピング"><Svg w={16} h={14}><ellipse cx="8" cy="5" rx="7.500" ry="4.500" fill="#96979a" stroke="#333" strokeDasharray="2 1" /><ellipse cx="8" cy="8" rx="7.500" ry="4.500" fill="#111" stroke="#999" /></Svg></IconButton>
			<IconButton label="参照レイヤー"><Svg w={16} h={16}><path d="M6 7h4l1 9H5zM5 2h6v5H5z" fill="#5e5f62" stroke="#222" /><path d="M5 4L0 1v4zM11 4l5-3v4z" fill="#b5b6b9" /></Svg></IconButton>
			<IconButton label="レイヤーをロック"><LockIcon /></IconButton>
			<IconButton label="透明ピクセルをロック"><LockIcon w={9} h={12} /><span className="mt-1 size-[9px] border border-[#444] bg-[#d0d0d0]" /></IconButton>
			<button type="button" aria-label="マスク" disabled className="flex h-[19px] w-[29px] items-center justify-center rounded-l border border-r-0 border-[#95969a] opacity-70">
				<Svg w={16} h={14}><path d="M0 4l5 2 4-6 1 6 6 3-5 2 1 3-6-2-4 1z" fill="#a4a5a8" /><path d="M8 8l6 5M14 8l-6 5" stroke="#444" strokeWidth="2" /></Svg>
				<Tri dir="down" />
			</button>
		</div>
		<div className="flex h-[24px] items-center gap-1 px-[2px]">
			<StackIcon />
			<div className="flex-1" />
			<IconButton label="新規ラスターレイヤー"><PageIcon /></IconButton>
			<IconButton label="新規レイヤーフォルダー"><Svg w={18} h={16}><path d="M.5 14.500V1.500h5l1 2h8v11z" fill="#a5a6a9" stroke="#333" /><path d="M9.500 6.500h8v6l-3 3h-5z" fill="#f4f4f4" stroke="#222" /></Svg></IconButton>
			<IconButton label="下のレイヤーに転写"><MergeIcon off /></IconButton>
			<IconButton label="下のレイヤーに結合"><MergeIcon /></IconButton>
			<IconButton label="レイヤーマスクを作成"><Svg w={16} h={12}><path d="M.5.5h15v10H.5z" fill="#333435" stroke="#999" /><circle cx="8" cy="5.500" r="3" fill="#fff" /></Svg></IconButton>
			<IconButton label="マスクを適用" className="opacity-50"><Svg w={17} h={15}><path d="M3 0v12M0 9l3 5 3-5z" fill="#333" stroke="#333" /><path d="M6 1l10 5-3 6-7-3z" fill="#555" stroke="#333" /></Svg></IconButton>
			<IconButton label="レイヤーを削除"><TrashIcon /></IconButton>
		</div>
		<div className="ml-1 flex flex-1 border-t border-l border-[#333435]">
			<ul className="flex-1">
				<LayerRow active thumb={<span className={`h-[28px] w-[38px] shrink-0 border-2 border-black outline-1 outline-[#8fb4c4] ${CHECKER}`} />}>
					<div className="leading-[14px]">
						<div>100 %通常</div>
						<div>レイヤー 1</div>
					</div>
				</LayerRow>
				<LayerRow thumb={<span className="h-[26px] w-[34px] shrink-0 border border-black bg-white" />}>
					<span className="mb-2 ml-[2px] flex size-5 items-center justify-center border border-black bg-white">
						<Svg w={14} h={16}><path d="M1 1h8l4 4v10H1z" fill="#eef2f5" stroke="#222" strokeWidth="1.300" /><path d="M8 1v5h5" fill="none" stroke="#222" /></Svg>
					</span>
					<span className="mt-3 -ml-[2px]">用紙</span>
				</LayerRow>
			</ul>
			<div className="w-3 border-l border-[#606164] bg-[#6a6b6e]" />
		</div>
	</section>
)

const RightDock = () => (
	<aside className="flex w-[243px] shrink-0 flex-col border-r-2 border-[#2a323c] bg-[#7a7b7f]">
		<div className="flex h-[21px] shrink-0 items-center justify-between border-l border-[#8d8e91] bg-linear-to-b from-[#58595a] to-[#4a4b4c] pl-1">
			<span className="flex gap-[2px]">{[0, 1, 2].map((n) => <span key={n} className="h-2 w-px bg-[#222]" />)}</span>
			<span className="flex gap-3"><Chevrons d="M1 1l4 5-4 5" /><Chevrons d="M1 1l4 5-4 5M6 1l4 5-4 5" w={12} /></span>
		</div>
		<div className="flex min-h-0 flex-1 flex-col border-l-2 border-[#4a4b4d]">
			<Navigator />
			<AnimationCel />
			<Layers />
		</div>
	</aside>
)

export default function App() {
	return (
		<div className="relative flex h-screen flex-col overflow-hidden bg-[#5c5c5c] font-['DejaVu_Sans','Noto_Sans_CJK_JP',sans-serif]">
			<TitleBar />
			<MenuBar />
			<div className="flex min-h-0 flex-1">
				<CanvasArea />
				<MaterialStrip />
				<RightDock />
			</div>
			<footer className="h-px shrink-0 bg-black" />
			<FileMenu />
		</div>
	)
}
